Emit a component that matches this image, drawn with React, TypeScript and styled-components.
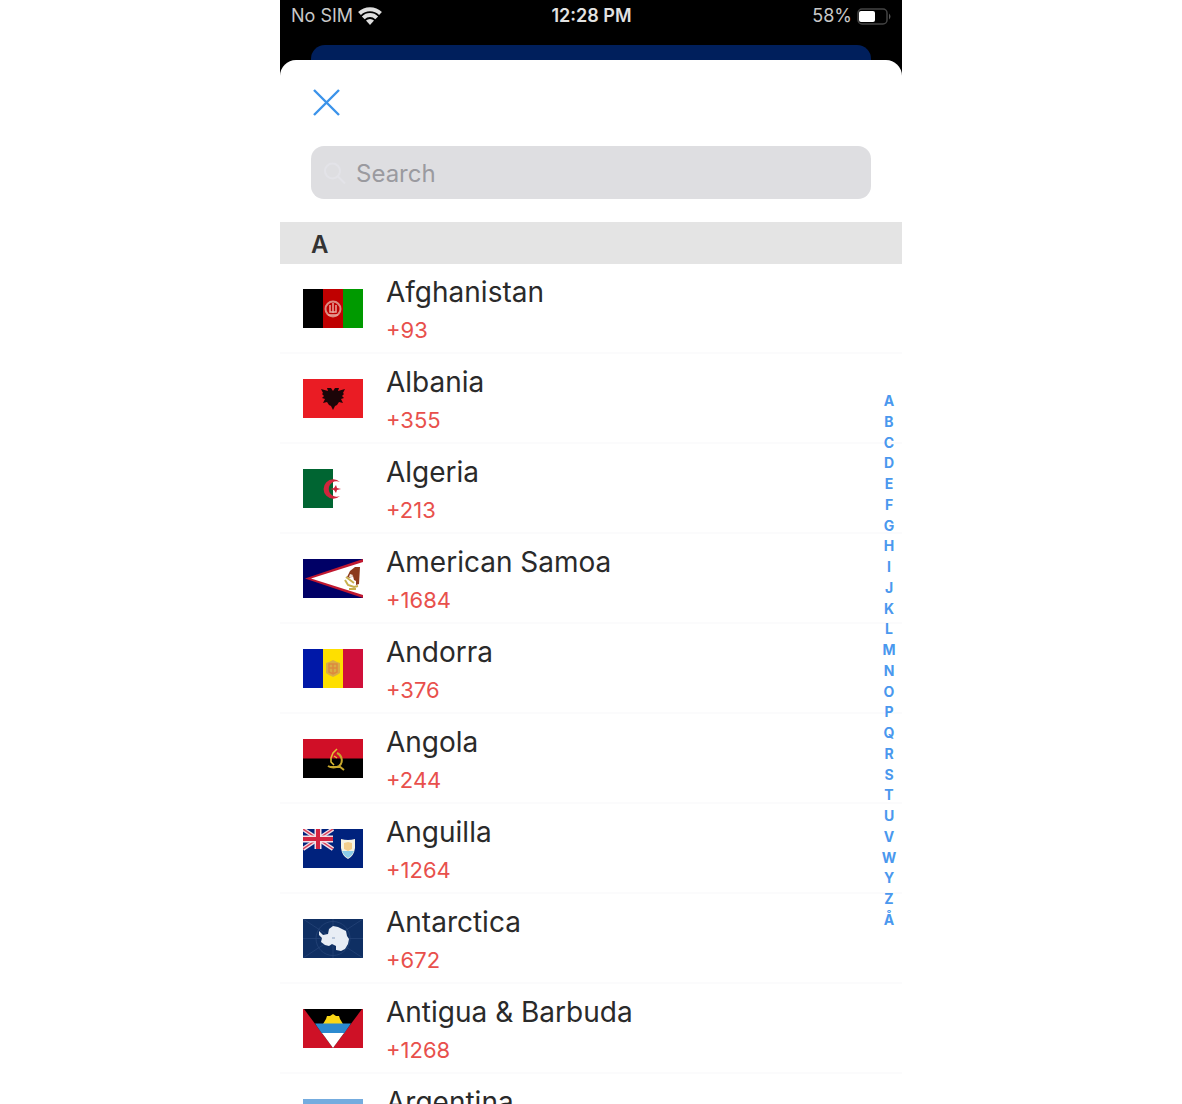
import React from "react";
import styled, { createGlobalStyle } from "styled-components";

const GlobalStyle = createGlobalStyle`
  *, *::before, *::after { box-sizing: border-box; }
  body {
    margin: 0;
    background: #fff;
    font-family: Inter, "Liberation Sans", sans-serif;
  }
`;

const Phone = styled.main`
  display: flex;
  flex-direction: column;
  width: 100%;
  max-width: 622px;
  height: 100vh;
  margin: 0 auto;
  overflow: hidden;
  background: #000;
`;

const StatusBar = styled.header`
  display: grid;
  grid-template-columns: 1fr auto 1fr;
  align-items: center;
  flex: none;
  height: 32px;
  margin-bottom: 13px;
  padding: 0 10px 0 11px;
  color: #c8c8c8;
  font-size: 18px;
  line-height: 20px;
`;

const StatusGroup = styled.div<{ $end?: boolean }>`
  display: flex;
  align-items: center;
  gap: 5px;
  justify-content: ${(p) => (p.$end ? "flex-end" : "flex-start")};
`;

const Clock = styled.time`
  color: #e2e2e2;
  font-weight: 600;
`;

const BackCard = styled.div`
  flex: none;
  height: 15px;
  margin: 0 31px;
  border-radius: 14px 14px 0 0;
  background: #001f5c;
`;

const Sheet = styled.section`
  position: relative;
  display: flex;
  flex: 1;
  flex-direction: column;
  min-height: 0;
  border-radius: 16px 16px 0 0;
  background: #fff;
`;

const Toolbar = styled.div`
  display: flex;
  flex: none;
  padding: 28px 32px 0;
`;

const CloseButton = styled.button`
  display: flex;
  padding: 0;
  border: 0;
  background: none;
  color: #3b93ea;
  cursor: pointer;
`;

const SearchField = styled.label`
  display: flex;
  align-items: center;
  flex: none;
  gap: 10px;
  height: 53px;
  margin: 29px 31px 23px;
  padding: 2px 12px 0;
  border-radius: 13px;
  background: #dedee1;
  color: #e3e3e8;
`;

const SearchInput = styled.input`
  flex: 1;
  min-width: 0;
  padding: 0;
  border: 0;
  outline: 0;
  background: none;
  color: #222;
  font: inherit;
  font-size: 24px;
  line-height: 32px;

  &::placeholder {
    color: #9a9a9f;
    opacity: 1;
  }
`;

const Scroller = styled.div`
  flex: 1;
  min-height: 0;
  overflow-y: auto;
  scrollbar-width: none;
`;

const SectionTitle = styled.h2`
  height: 42px;
  margin: 0;
  padding: 0 31px;
  background: #e4e4e4;
  color: #333;
  font-size: 24px;
  font-weight: 600;
  line-height: 46px;
`;

const CountryList = styled.ul`
  margin: 0;
  padding: 0;
  list-style: none;
`;

const CountryRow = styled.li`
  display: flex;
  align-items: center;
  gap: 23px;
  height: 90px;
  padding: 0 23px;
  border-bottom: 2px solid #fbfbfc;
`;

const FlagSvg = styled.svg`
  flex: none;
  width: 60px;
  height: 39px;
`;

const CountryText = styled.div`
  display: flex;
  flex-direction: column;
  gap: 4px;
  padding-top: 4px;
`;

const CountryName = styled.span`
  color: #2a2a2a;
  font-size: 28px;
  line-height: 36px;
`;

const DialCode = styled.span`
  color: #e8504c;
  font-size: 22px;
  line-height: 32px;
`;

const LetterIndex = styled.nav`
  position: absolute;
  top: 331px;
  right: 4px;
  display: flex;
  flex-direction: column;
  justify-content: space-between;
  width: 18px;
  height: 539px;
`;

const LetterLink = styled.a`
  color: #4a98ee;
  font-size: 14px;
  font-weight: 700;
  line-height: 20px;
  text-align: center;
  text-decoration: none;
`;

const flags: Record<string, React.ReactNode> = {
  Afghanistan: (
    <>
      <path fill="#000" d="M0 0h20v39H0z" />
      <path fill="#bf0000" d="M20 0h20v39H20z" />
      <path fill="#009a00" d="M40 0h20v39H40z" />
      <circle cx="30" cy="20" r="7.5" fill="none" stroke="#dc8a80" strokeWidth="2" />
      <path d="M27 16v7h6v-7M30 14v10M25 26h10" fill="none" stroke="#e8a69d" strokeWidth="1.5" />
    </>
  ),
  Albania: (
    <>
      <path fill="#ea1c24" d="M0 0h60v39H0z" />
      <path
        fill="#1c0508"
        d="M30 12l-2-3-4 0 1 3-7-2 2 4-1 1 2 2-2 2 3 1-2 4 4-1 2 3 2 1 2 4 2-4 2-1 2-3 4 1-2-4 3-1-2-2 2-2-1-1 2-4-7 2 1-3-4 0z"
      />
    </>
  ),
  Algeria: (
    <>
      <path fill="#fff" d="M0 0h60v39H0z" />
      <path fill="#006532" d="M0 0h30v39H0z" />
      <path d="M37 13a9.7 9.7 0 1 0 0 14 7.8 7.8 0 1 1 0-14z" fill="#d0253c" />
      <path d="M38 20l-4-1-1-3-2 3-4 1 4 1 2 3 1-3z" fill="#d0253c" />
    </>
  ),
  "American Samoa": (
    <>
      <path fill="#000066" d="M0 0h60v39H0z" />
      <path fill="#c01830" d="M60 0v39L2 19.5z" />
      <path fill="#fff" d="M60 3v33L8 19.5z" />
      <path fill="#8c3a1c" d="M57 8l-5 0-5 4-3 6 3 1 3-2 1 4 2 1 0 4 3-1z" />
      <path d="M42 21l3 5 6 2 4-1M43 18l8 6M46 30h7" fill="none" stroke="#c8b04e" strokeWidth="2" />
      <path fill="#f3e6d8" d="M47 15l3 1-2 3-2-1z" />
    </>
  ),
  Andorra: (
    <>
      <path fill="#0018a8" d="M0 0h20v39H0z" />
      <path fill="#fedf00" d="M20 0h20v39H20z" />
      <path fill="#d0103a" d="M40 0h20v39H40z" />
      <path fill="#d9ad45" d="M23 14l3-1 4-2 4 2 3 1 0 10-3 2-4 2-4-2-3-2z" />
      <path d="M26 15h8v8l-4 2-4-2zM30 15v9M26 19h8" fill="none" stroke="#dd8a3e" strokeWidth="1.5" />
    </>
  ),
  Angola: (
    <>
      <path fill="#d00f27" d="M0 0h60v20H0z" />
      <path fill="#000" d="M0 19.5h60V39H0z" />
      <path
        d="M34 14c6 3 6 10 2 13-3 2-8 2-11 0M26 28h10M36 27l5 4"
        fill="none"
        stroke="#c8a82c"
        strokeWidth="2"
      />
      <path d="M34 10l-4 4-2 5 0 4 3 3M31 17l3 2" fill="none" stroke="#e2c234" strokeWidth="1.5" />
    </>
  ),
  Anguilla: (
    <>
      <path fill="#00227d" d="M0 0h60v39H0z" />
      <path d="M0 0l30 20M30 0L0 20" stroke="#f2dfe6" strokeWidth="4" />
      <path d="M0 0l30 20M30 0L0 20" stroke="#d8405a" strokeWidth="1.5" />
      <path d="M15 0v20M0 10h30" stroke="#f2dfe6" strokeWidth="7" />
      <path d="M15 0v20M0 10h30" stroke="#d42440" strokeWidth="4" />
      <path fill="#f7f3e4" d="M38 10q7 2 14 0v9q-1 8-7 11-6-3-7-11z" />
      <path fill="#8ccbe8" d="M39 22h12q-2 5-6 7-4-2-6-7z" />
      <path fill="#f3cd8c" d="M41 14l4-1 4 1v6l-4 2-4-2z" />
    </>
  ),
  Antarctica: (
    <>
      <path fill="#0f2f63" d="M0 0h60v39H0z" />
      <path
        d="M0 0l60 39M60 0L0 39M30 0v39M0 19.5h60"
        stroke="#28467a"
        strokeWidth=".7"
      />
      <circle cx="30" cy="19.5" r="17" fill="none" stroke="#28467a" strokeWidth=".7" />
      <path
        fill="#e8edf5"
        d="M16 12l4 4 5-1 1-5 4-3 5 1 4 2 4 2 1 5 2 3-1 5-3 5-4 2-5-1 0-4-4-2-3 2-4-1-4-3 1-4-3-3z"
      />
      <path d="M29 19h3" stroke="#a9b8d2" strokeWidth="1.5" />
    </>
  ),
  "Antigua & Barbuda": (
    <>
      <path fill="#ce1126" d="M0 0h60v39H0z" />
      <path fill="#000" d="M1 0h58L30 39z" />
      <path fill="#f9d616" d="M20 15l3-5 1-3 3 0 3-2 3 2 3 0 1 3 3 5z" />
      <path fill="#2b8ad0" d="M12 14.500h36l-7 10H19z" />
      <path fill="#fff" d="M19 24h22L30 39z" />
    </>
  ),
  Argentina: (
    <>
      <path fill="#fff" d="M0 0h60v39H0z" />
      <path fill="#74acdf" d="M0 0h60v13H0zM0 26h60v13H0z" />
      <circle cx="30" cy="19.5" r="4" fill="#f6b40e" />
    </>
  ),
};

const countries = [
  { name: "Afghanistan", code: "+93" },
  { name: "Albania", code: "+355" },
  { name: "Algeria", code: "+213" },
  { name: "American Samoa", code: "+1684" },
  { name: "Andorra", code: "+376" },
  { name: "Angola", code: "+244" },
  { name: "Anguilla", code: "+1264" },
  { name: "Antarctica", code: "+672" },
  { name: "Antigua & Barbuda", code: "+1268" },
  { name: "Argentina", code: "+54" },
];

const letters = Array.from("ABCDEFGHIJKLMNOPQRSTUVWYZÅ");

const WifiIcon = () => (
  <svg width="24" height="20" viewBox="0 0 24 20" fill="none" stroke="#dedede" strokeWidth="4" aria-hidden="true">
    <path d="M1.500 7.500a14.800 14.800 0 0 1 21 0" />
    <path d="M5.300 11.800a9.500 9.500 0 0 1 13.400 0" />
    <path d="M8 14.600a5.600 5.600 0 0 1 8 0L12 19z" fill="#dedede" stroke="none" />
  </svg>
);

const BatteryIcon = () => (
  <svg width="35" height="17" viewBox="0 0 35 17" aria-hidden="true">
    <rect x="1" y="1" width="29" height="15" rx="4" fill="none" stroke="#444" strokeWidth="1.5" />
    <rect x="2" y="3" width="16" height="11" rx="2" fill="#fff" />
    <path d="M32 5.500q3 3 0 6z" fill="#555" />
  </svg>
);

const CloseIcon = () => (
  <svg width="29" height="29" viewBox="0 0 29 29" fill="none" stroke="currentColor" strokeWidth="2.4" aria-hidden="true">
    <path d="M2 2l25 25M27 2L2 27" />
  </svg>
);

const SearchIcon = () => (
  <svg width="23" height="24" viewBox="0 0 23 24" fill="none" stroke="currentColor" strokeWidth="2" aria-hidden="true">
    <circle cx="9.500" cy="9" r="7.5" />
    <path d="M15 14.500l7 7" />
  </svg>
);

export default function App() {
  return (
    <>
      <GlobalStyle />
      <Phone>
        <StatusBar>
          <StatusGroup>
            <span>No SIM</span>
            <WifiIcon />
          </StatusGroup>
          <Clock>12:28 PM</Clock>
          <StatusGroup $end>
            <span>58%</span>
            <BatteryIcon />
          </StatusGroup>
        </StatusBar>
        <BackCard />
        <Sheet>
          <Toolbar>
            <CloseButton type="button" aria-label="Close">
              <CloseIcon />
            </CloseButton>
          </Toolbar>
          <SearchField>
            <SearchIcon />
            <SearchInput type="text" placeholder="Search" aria-label="Search" />
          </SearchField>
          <Scroller>
            <SectionTitle id="A">A</SectionTitle>
            <CountryList>
              {countries.map(({ name, code }) => (
                <CountryRow key={name}>
                  <FlagSvg viewBox="0 0 60 39" aria-hidden="true">
                    {flags[name]}
                  </FlagSvg>
                  <CountryText>
                    <CountryName>{name}</CountryName>
                    <DialCode>{code}</DialCode>
                  </CountryText>
                </CountryRow>
              ))}
            </CountryList>
          </Scroller>
          <LetterIndex aria-label="Countries by first letter">
            {letters.map((letter) => (
              <LetterLink key={letter} href={`#${letter}`}>
                {letter}
              </LetterLink>
            ))}
          </LetterIndex>
        </Sheet>
      </Phone>
    </>
  );
}
